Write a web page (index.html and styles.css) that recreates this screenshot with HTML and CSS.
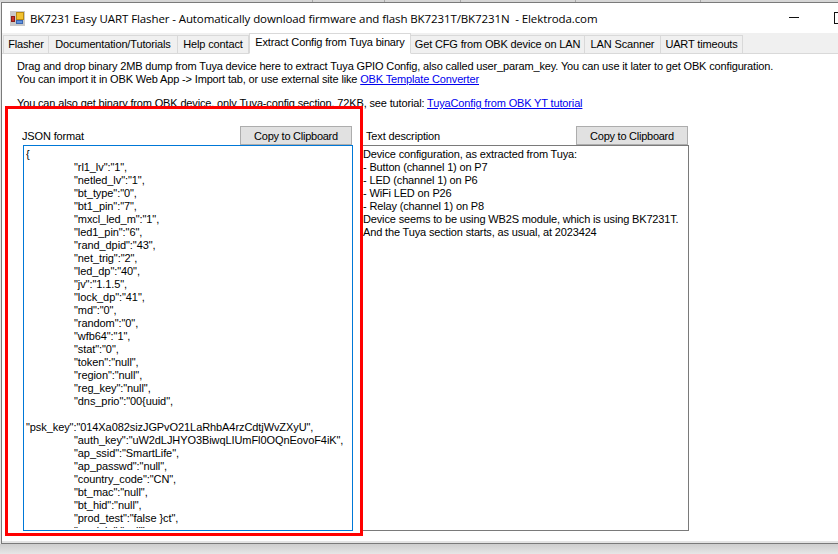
FILE: index.html
```html
<!DOCTYPE html>
<html lang="en">
<head>
<meta charset="utf-8">
<title>BK7231 Easy UART Flasher</title>
<link rel="stylesheet" href="styles.css">
</head>
<body>
<div class="backdrop-strip">
  <span class="seg seg-a"></span><span class="seg seg-b"></span><span class="seg seg-c"></span><span class="seg seg-d"></span><span class="seg seg-e"></span>
</div>
<main class="window">
  <header class="titlebar">
    <svg class="app-icon" width="15" height="15" viewBox="0 0 15 15">
      <rect x="0" y="0" width="15" height="15" fill="#c9c9c9"/>
      <rect x="6.5" y="1.5" width="7" height="7" fill="#f2c230" stroke="#b98a10"/>
      <rect x="1.5" y="5.5" width="3" height="5" fill="#c8322a" stroke="#8a1d18"/>
      <rect x="6.5" y="9.5" width="6" height="3" fill="#5f93e0" stroke="#3a66b0"/>
    </svg>
    <span class="title">BK7231 Easy UART Flasher - Automatically download firmware and flash BK7231T/BK7231N&nbsp; - Elektroda.com</span>
    <span class="min-btn"></span>
    <span class="max-btn"></span>
  </header>
  <nav class="tabs">
    <span class="tab tab-flasher">Flasher</span>
    <span class="tab tab-docs">Documentation/Tutorials</span>
    <span class="tab tab-help">Help contact</span>
    <span class="tab tab-active">Extract Config from Tuya binary</span>
    <span class="tab tab-cfg">Get CFG from OBK device on LAN</span>
    <span class="tab tab-lan">LAN Scanner</span>
    <span class="tab tab-uart">UART timeouts</span>
  </nav>
  <section class="content">
    <p class="intro">Drag and drop binary 2MB dump from Tuya device here to extract Tuya GPIO Config, also called user_param_key. You can use it later to get OBK configuration.<br>You can import it in OBK Web App -&gt; Import tab, or use external site like <a href="#">OBK Template Converter</a></p>
    <p class="intro intro-second">You can also get binary from OBK device, only Tuya-config section, 72KB, see tutorial: <a href="#">TuyaConfig from OBK YT tutorial</a></p>
    <div class="panes">
      <div class="pane pane-json">
        <div class="pane-head">
          <span class="pane-label">JSON format</span>
          <button class="copy-btn">Copy to Clipboard</button>
        </div>
        <div class="box box-json">
          <pre class="box-text-area">{
	"rl1_lv":"1",
	"netled_lv":"1",
	"bt_type":"0",
	"bt1_pin":"7",
	"mxcl_led_m":"1",
	"led1_pin":"6",
	"rand_dpid":"43",
	"net_trig":"2",
	"led_dp":"40",
	"jv":"1.1.5",
	"lock_dp":"41",
	"md":"0",
	"random":"0",
	"wfb64":"1",
	"stat":"0",
	"token":"null",
	"region":"null",
	"reg_key":"null",
	"dns_prio":"00{uuid",

"psk_key":"014Xa082sizJGPvO21LaRhbA4rzCdtjWvZXyU",
	"auth_key":"uW2dLJHYO3BiwqLIUmFl0OQnEovoF4iK",
	"ap_ssid":"SmartLife",
	"ap_passwd":"null",
	"country_code":"CN",
	"bt_mac":"null",
	"bt_hid":"null",
	"prod_test":"false }ct",
	"module":"null",</pre>
        </div>
      </div>
      <div class="pane pane-text">
        <div class="pane-head">
          <span class="pane-label">Text description</span>
          <button class="copy-btn">Copy to Clipboard</button>
        </div>
        <div class="box box-plain">
          <pre class="box-text-area">Device configuration, as extracted from Tuya:
- Button (channel 1) on P7
- LED (channel 1) on P6
- WiFi LED on P26
- Relay (channel 1) on P8
Device seems to be using WB2S module, which is using BK7231T.
And the Tuya section starts, as usual, at 2023424</pre>
        </div>
      </div>
    </div>
  </section>
</main>
<div class="backdrop-foot"></div>
<div class="highlight"></div>
</body>
</html>
```
FILE: styles.css
```css
html, body {
  margin: 0;
  height: 100%;
}
body {
  width: 838px;
  height: 554px;
  overflow: hidden;
  background: #e6e6e6;
  font-family: "Liberation Sans", Arial, sans-serif;
  font-size: 11px;
  letter-spacing: -0.15px;
  color: #000;
  position: relative;
}
.backdrop-strip {
  height: 2px;
  display: flex;
  background: #d6d6d6;
}
.seg {
  box-sizing: border-box;
  border-right: 1px solid #a8a8a8;
}
.seg-a { width: 313px; }
.seg-b { width: 72px; }
.seg-c { width: 76px; }
.seg-d { width: 115px; }
.seg-e { width: 125px; }
.window {
  margin-left: 1px;
  height: 542px;
  box-sizing: border-box;
  background: #fff;
  border: 1px solid #7a7a7a;
  border-right: 0;
  display: flex;
  flex-direction: column;
  box-shadow: inset 0 -2px 0 #e4e4e4;
}
.backdrop-foot {
  height: 10px;
  background: linear-gradient(#cdcdcd, #e6e6e6);
}
.titlebar {
  height: 30px;
  flex: none;
  display: flex;
  align-items: center;
  padding-left: 8px;
  position: relative;
}
.app-icon {
  flex: none;
  margin-right: 5px;
}
.title {
  font-family: "Open Sans", sans-serif;
  font-size: 11.5px;
  letter-spacing: -0.1px;
  white-space: nowrap;
}
.min-btn {
  position: absolute;
  left: 787px;
  top: 14px;
  width: 10px;
  height: 1px;
  background: #111;
}
.max-btn {
  position: absolute;
  left: 832px;
  top: 9px;
  width: 10px;
  height: 10px;
  border: 1px solid #111;
}
.tabs {
  flex: none;
  height: 20px;
  display: flex;
  align-items: flex-end;
  background: #f0f0f0;
  border-bottom: 1px solid #d9d9d9;
  padding-left: 1px;
}
.tab {
  box-sizing: border-box;
  height: 19px;
  margin-bottom: -1px;
  border: 1px solid #d9d9d9;
  border-left-width: 0;
  background: #f0f0f0;
  text-align: center;
  line-height: 17px;
  white-space: nowrap;
}
.tab-flasher { width: 46px; border-left-width: 1px; }
.tab-docs { width: 129px; }
.tab-help { width: 71px; }
.tab-active {
  width: 162px;
  height: 21px;
  background: #fff;
  border-left-width: 1px;
  border-bottom-color: #fff;
}
.tab-cfg { width: 174px; }
.tab-lan { width: 76px; }
.tab-uart { width: 82px; }
.content {
  flex: 1;
  min-height: 0;
  padding-left: 15px;
}
.intro {
  margin: 0;
  padding-top: 6px;
  line-height: 13px;
  white-space: nowrap;
}
.intro-second {
  padding-top: 11px;
}
a {
  color: #0000ee;
  text-decoration: underline;
}
.panes {
  display: flex;
  margin-top: 16px;
}
.pane-json {
  width: 331px;
  margin-left: 5px;
}
.pane-text {
  width: 328px;
  margin-left: 8px;
}
.pane-head {
  height: 19px;
  display: flex;
  justify-content: space-between;
  align-items: center;
}
.pane-text .pane-label {
  margin-left: 5px;
}
.copy-btn {
  box-sizing: border-box;
  width: 112px;
  height: 19px;
  margin-right: 1px;
  padding: 0;
  background: #e1e1e1;
  border: 1px solid #adadad;
  font: inherit;
  letter-spacing: -0.25px;
  color: #000;
}
.box {
  box-sizing: border-box;
  height: 386px;
  padding: 2px;
}
.box-json {
  border: 1px solid #0078d7;
  margin-left: 1px;
  letter-spacing: -0.08px;
}
.box-plain {
  border: 1px solid #7a7a7a;
  padding-left: 1px;
}
.box-text-area {
  height: 380px;
  margin: 0;
  overflow: hidden;
  font: inherit;
  line-height: 13px;
  tab-size: 48px;
  white-space: pre;
}
.highlight {
  position: absolute;
  left: 5px;
  top: 106px;
  width: 352px;
  height: 424px;
  border: 3px solid #f00;
}
```
